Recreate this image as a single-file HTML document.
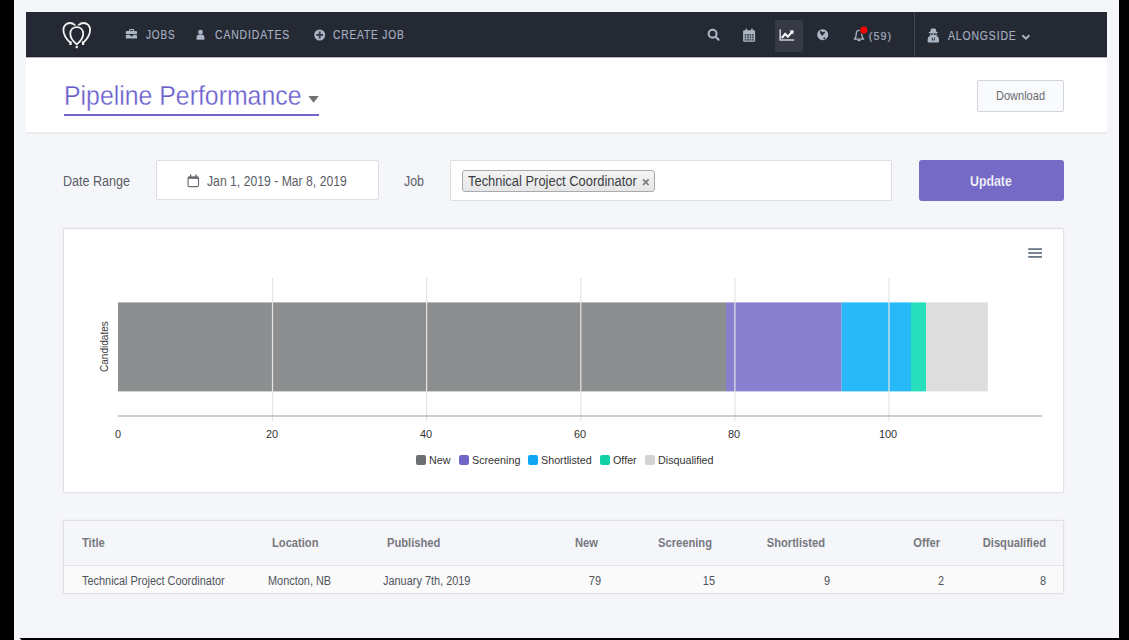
<!DOCTYPE html>
<html><head><meta charset="utf-8">
<style>
html,body{margin:0;padding:0;}
body{width:1129px;height:640px;position:relative;overflow:hidden;background:#000;font-family:"Liberation Sans",sans-serif;}
.a{position:absolute;}
.t{position:absolute;white-space:nowrap;line-height:1;transform-origin:0 0;}
.r{transform-origin:100% 0;text-align:right;}
.c{transform-origin:50% 0;text-align:center;}
#page{left:14px;top:0;width:1105px;height:640px;background:#f5f6fa;}
#nav{left:26px;top:12px;width:1081px;height:45px;background:#252934;}
.nt{color:#a3adbf;font-size:12.3px;letter-spacing:1px;transform:scaleX(0.85);-webkit-text-stroke:0.2px #a3adbf;}
#hdr{left:26px;top:57px;width:1081px;height:75px;background:#fff;border-bottom:2px solid #ececef;}
.box{position:absolute;box-sizing:border-box;background:#fff;border:1px solid #dddee2;border-radius:2px;}
.ft{font-size:14px;color:#5a5e67;}
.th{font-size:12px;font-weight:bold;color:#77797f;transform:scaleX(0.93);}
.td{font-size:12px;color:#50545c;transform:scaleX(0.91);}
.ax{font-size:11.5px;color:#333;width:40px;text-align:center;transform:scaleX(0.95);}
.lg{font-size:11.2px;color:#333;transform:scaleX(0.96);}
.sw{position:absolute;width:10px;height:10px;border-radius:2px;top:455px;}
</style></head>
<body>
<div id="page" class="a"></div>
<svg class="a" style="left:0;top:636px" width="1129" height="4" viewBox="0 636 1129 4"><path d="M19.5 638 H1129 V640 H21.5Z" fill="#000"/></svg>

<!-- ============ NAVBAR ============ -->
<div id="nav" class="a"></div>
<div class="a" style="left:26px;top:56px;width:1081px;height:1px;background:#1d2029"></div>

<!-- logo -->
<svg class="a" style="left:58px;top:18px" width="40" height="34" viewBox="58 18 40 34">
  <g fill="none" stroke="#f2f2f2" stroke-width="1.8" stroke-linejoin="round">
    <path d="M70.4 42.8 C66.6 39.2 63.4 35 63.4 29.9 C63.4 25.9 66.3 23 69.9 23 C73.6 23 76.6 25.9 76.6 29.9 C76.6 35 74.1 39.2 70.4 42.8Z"/>
    <path d="M83.1 42.8 C86.9 39.2 90.1 35 90.1 29.9 C90.1 25.9 87.2 23 83.6 23 C79.9 23 76.9 25.9 76.9 29.9 C76.9 35 79.4 39.2 83.1 42.8Z"/>
    <path d="M76.75 44.4 C73 41.2 70.3 37.8 70.3 33.7 C70.3 29.7 73.1 27.1 76.75 27.1 C80.4 27.1 83.2 29.7 83.2 33.7 C83.2 37.8 80.5 41.2 76.75 44.4Z" fill="#252934" stroke="#252934" stroke-width="3.8"/>
    <path d="M76.75 44.4 C73 41.2 70.3 37.8 70.3 33.7 C70.3 29.7 73.1 27.1 76.75 27.1 C80.4 27.1 83.2 29.7 83.2 33.7 C83.2 37.8 80.5 41.2 76.75 44.4Z"/>
  </g>
  <g fill="#f2f2f2">
    <rect x="69.4" y="42.6" width="2.2" height="2.4"/>
    <rect x="82" y="42.6" width="2.2" height="2.4"/>
    <rect x="75.65" y="45.8" width="2.2" height="2.4"/>
  </g>
</svg>
<!-- briefcase -->
<svg class="a" style="left:124px;top:27px" width="15" height="13" viewBox="124 27 15 13">
  <path d="M129.2 31.2 V29.6 C129.2 29.2 129.5 28.9 129.9 28.9 H133.3 C133.7 28.9 134 29.2 134 29.6 V31.2 H132.9 V30 H130.3 V31.2Z" fill="#acb5c4"/>
  <rect x="125.8" y="31" width="11.2" height="3.3" rx="0.7" fill="#acb5c4"/>
  <rect x="125.8" y="35.1" width="11.2" height="3.5" rx="0.7" fill="#acb5c4"/>
  <rect x="130.3" y="34" width="2.6" height="2.2" rx="0.4" fill="#252934"/>
</svg>
<div class="t nt" style="left:145.8px;top:29px;transform:scaleX(0.815)">JOBS</div>
<!-- user -->
<svg class="a" style="left:194px;top:28px" width="13" height="14" viewBox="194 28 13 14">
  <circle cx="200.5" cy="32.1" r="2.4" fill="#acb5c4"/>
  <path d="M196.6 39.8 V37.4 C196.6 35.6 197.8 34.6 199.6 34.6 H201.4 C203.2 34.6 204.4 35.6 204.4 37.4 V39.8Z" fill="#acb5c4"/>
</svg>
<div class="t nt" style="left:215px;top:29px">CANDIDATES</div>
<!-- plus circle -->
<svg class="a" style="left:312px;top:28px" width="15" height="15" viewBox="312 28 15 15">
  <circle cx="319.7" cy="35" r="5.5" fill="#acb5c4"/>
  <path d="M319.7 31.6v6.8M316.3 35h6.8" stroke="#3c4150" stroke-width="1.9"/>
</svg>
<div class="t nt" style="left:333.3px;top:29px;transform:scaleX(0.83)">CREATE JOB</div>

<!-- search -->
<svg class="a" style="left:705px;top:27px" width="16" height="16" viewBox="705 27 16 16">
  <circle cx="712.6" cy="33.7" r="3.95" fill="none" stroke="#acb5c4" stroke-width="2.1"/>
  <path d="M715.6 36.7 L718.6 39.7" stroke="#acb5c4" stroke-width="2.1" stroke-linecap="round"/>
</svg>
<!-- calendar -->
<svg class="a" style="left:742px;top:27px" width="15" height="16" viewBox="742 27 15 16">
  <rect x="743.1" y="30.2" width="12" height="11.6" rx="1.2" fill="#acb5c4"/>
  <rect x="745.5" y="28.6" width="1.7" height="3" rx="0.8" fill="#acb5c4"/>
  <rect x="751.1" y="28.6" width="1.7" height="3" rx="0.8" fill="#acb5c4"/>
  <g fill="#252934" opacity="0.75"><rect x="744.60" y="34.00" width="1.75" height="1.75"/><rect x="747.05" y="34.00" width="1.75" height="1.75"/><rect x="749.50" y="34.00" width="1.75" height="1.75"/><rect x="751.95" y="34.00" width="1.75" height="1.75"/><rect x="744.60" y="36.45" width="1.75" height="1.75"/><rect x="747.05" y="36.45" width="1.75" height="1.75"/><rect x="749.50" y="36.45" width="1.75" height="1.75"/><rect x="751.95" y="36.45" width="1.75" height="1.75"/><rect x="744.60" y="38.90" width="1.75" height="1.75"/><rect x="747.05" y="38.90" width="1.75" height="1.75"/><rect x="749.50" y="38.90" width="1.75" height="1.75"/><rect x="751.95" y="38.90" width="1.75" height="1.75"/></g>
</svg>
<!-- active chart -->
<div class="a" style="left:775px;top:20px;width:28px;height:32px;background:#363a47;border-radius:2px"></div>
<svg class="a" style="left:775px;top:20px" width="28" height="32" viewBox="775 20 28 32">
  <path d="M780.2 29.4 V40 H794.2" fill="none" stroke="#cdd0d8" stroke-width="1.6"/>
  <path d="M781.8 38 L785.2 33.8 L787.8 36.6 L792 32" fill="none" stroke="#f8f8fa" stroke-width="2.1"/>
  <path d="M789.4 30.6 L793.6 30.2 L793.3 34.4Z" fill="#f8f8fa"/>
</svg>
<!-- globe -->
<svg class="a" style="left:815px;top:27px" width="16" height="16" viewBox="815 27 16 16">
  <circle cx="822.7" cy="34.7" r="5.5" fill="#acb5c4"/>
  <path d="M819.8 31.4 C820.6 30.6 821.8 31 822.3 32.2 C823.1 31.6 824.5 31.5 825.3 32.1 C824.7 33.5 823.5 34.4 822.3 35.9 C821.1 34.6 820 33.3 819.8 31.4Z" fill="#252934"/>
  <circle cx="824.3" cy="38.3" r="0.95" fill="#252934"/>
</svg>
<!-- bell -->
<svg class="a" style="left:851px;top:24px" width="18" height="19" viewBox="851 24 18 19">
  <path d="M854.3 39.2 H863.7 C862.3 38 861.8 36.6 861.8 34.4 C861.8 31.8 860.6 30.4 859 30.4 C857.4 30.4 856.2 31.8 856.2 34.4 C856.2 36.6 855.7 38 854.3 39.2Z" fill="none" stroke="#acb5c4" stroke-width="1.3" stroke-linejoin="round"/>
  <path d="M857.8 40 C858 40.8 860 40.8 860.2 40" stroke="#acb5c4" stroke-width="1.2" fill="none"/>
  <circle cx="863.8" cy="30" r="4.3" fill="#1f3338"/>
  <circle cx="863.8" cy="30" r="3.6" fill="#ff0000"/>
</svg>
<div class="t nt" style="left:868.8px;top:30.9px;font-size:10.8px;letter-spacing:1px;transform:none">(59)</div>
<!-- divider -->
<div class="a" style="left:913.5px;top:12px;width:1px;height:45px;background:#3d4453"></div>
<!-- spy -->
<svg class="a" style="left:926px;top:27px" width="14" height="17" viewBox="926 27 14 17">
  <path d="M931 28.8 C932 28.4 934.6 28.4 935.6 28.8 L936.4 31.8 L937.8 32.2 L937.8 33 L928.8 33 L928.8 32.2 L930.2 31.8 Z" fill="#acb5c4"/>
  <path d="M929.8 33.6 H936.8 L936.6 36 L938 36.8 C938.8 37.6 939 39.6 939 41 C939 42 938.4 42.5 937.4 42.5 H929.2 C928.2 42.5 927.6 42 927.6 41 C927.6 39.6 927.8 37.6 928.6 36.8 L930 36 Z" fill="#acb5c4"/>
  <rect x="930.8" y="34" width="1.9" height="0.9" fill="#252934"/><rect x="933.9" y="34" width="1.9" height="0.9" fill="#252934"/>
  <path d="M931.6 37.4 L932.4 37.4 L932.9 39.4 L932.9 40.4 L932.1 40.4Z M935 37.4 L934.2 37.4 L933.7 39.4 L933.7 40.4 L934.5 40.4Z" fill="#252934"/>
</svg>
<div class="t nt" style="left:947.7px;top:30.4px">ALONGSIDE</div>
<svg class="a" style="left:1020px;top:33px" width="12" height="8" viewBox="1020 33 12 8">
  <path d="M1022.4 35.2 L1025.9 38.6 L1029.4 35.2" fill="none" stroke="#acb5c4" stroke-width="1.9"/>
</svg>

<!-- ============ HEADER ============ -->
<div id="hdr" class="a"></div>
<div class="a" style="left:26px;top:57px;width:1081px;height:1px;background:#b8bac0"></div>
<div class="t" style="left:64px;top:81.6px;font-size:28px;color:#6a5ecd;transform:scaleX(0.887);-webkit-text-stroke:0.3px #fff">Pipeline Performance</div>
<svg class="a" style="left:307px;top:94px" width="14" height="10" viewBox="307 94 14 10">
  <path d="M308.4 95.9 H318.8 L313.6 102.7Z" fill="#707174"/>
</svg>
<div class="a" style="left:64px;top:113.5px;width:255px;height:2px;background:#7065cd"></div>
<div class="box" style="left:977px;top:80px;width:87px;height:32px;background:#f9fafb;border-color:#d3d4d7"></div>
<div class="t" style="left:995.8px;top:90px;font-size:12.6px;color:#686b72;transform:scaleX(0.875)">Download</div>

<!-- ============ FILTERS ============ -->
<div class="t ft" style="left:63px;top:174.1px;transform:scaleX(0.897)">Date Range</div>
<div class="box" style="left:156px;top:160px;width:223px;height:40px"></div>
<svg class="a" style="left:186px;top:173px" width="14" height="15" viewBox="186 173 14 15">
  <rect x="188.1" y="177" width="10.4" height="9.6" rx="1.2" fill="none" stroke="#6a6b70" stroke-width="1.15"/>
  <rect x="188" y="176.6" width="10.6" height="2.3" fill="#6a6b70"/>
  <rect x="189.95" y="174.3" width="1.35" height="3.2" rx="0.6" fill="#6a6b70"/>
  <rect x="195.35" y="174.3" width="1.35" height="3.2" rx="0.6" fill="#6a6b70"/>
</svg>
<div class="t ft" style="left:206.5px;top:174.3px;transform:scaleX(0.872)">Jan 1, 2019 - Mar 8, 2019</div>
<div class="t ft" style="left:403.5px;top:174.1px;transform:scaleX(0.886)">Job</div>
<div class="box" style="left:450px;top:160px;width:442px;height:41px"></div>
<div class="a" style="left:462px;top:169.5px;width:193px;height:22px;box-sizing:border-box;border:1px solid #a9aaad;border-radius:3px;background:linear-gradient(#f4f4f4,#e6e6e6);"></div>
<div class="t" style="left:467.6px;top:173.8px;font-size:14px;color:#3a3d44;transform:scaleX(0.923)">Technical Project Coordinator</div>
<svg class="a" style="left:640px;top:175px" width="12" height="12" viewBox="640 175 12 12">
  <path d="M643 179.4 L648.6 185 M648.6 179.4 L643 185" stroke="#77787c" stroke-width="1.7"/>
</svg>
<div class="a" style="left:919px;top:160px;width:145px;height:41px;background:#766ac7;border-radius:3px"></div>
<div class="t" style="left:970.3px;top:174px;font-size:14px;font-weight:bold;color:#fff;transform:scaleX(0.88);-webkit-text-stroke:0.25px #766ac7">Update</div>

<!-- ============ CHART ============ -->
<div class="box" style="left:63px;top:228px;width:1001px;height:265px;border-color:#e1e1e5;box-shadow:0 0 0 0.6px #ececef"></div>
<svg class="a" style="left:0;top:0" width="1129" height="640" viewBox="0 0 1129 640">
  <rect x="118" y="302.4" width="608" height="89" fill="#8d8e8f"/>
  <rect x="726" y="302.4" width="115.6" height="89" fill="#8880cf"/>
  <rect x="841.6" y="302.4" width="69.4" height="89" fill="#27b9f7"/>
  <rect x="911" y="302.4" width="15.2" height="89" fill="#27dfba"/>
  <rect x="926.2" y="302.4" width="61.6" height="89" fill="#dddddd"/>
  <g fill="#e4e4e4">
    <rect x="271.9" y="278" width="1.2" height="143"/>
    <rect x="426.0" y="278" width="1.2" height="143"/>
    <rect x="580.2" y="278" width="1.2" height="143"/>
    <rect x="734.3" y="278" width="1.2" height="143"/>
    <rect x="888.4" y="278" width="1.2" height="143"/>
  </g>
  <rect x="118" y="415.5" width="924" height="1" fill="#8fa2ae"/>
  <g fill="#6b7888">
    <rect x="1028.2" y="248.2" width="13.8" height="1.8"/>
    <rect x="1028.2" y="252.1" width="13.8" height="1.8"/>
    <rect x="1028.2" y="256" width="13.8" height="1.8"/>
  </g>
</svg>
<div class="t c ax" style="left:98px;top:429.1px">0</div>
<div class="t c ax" style="left:252px;top:429.1px">20</div>
<div class="t c ax" style="left:406px;top:429.1px">40</div>
<div class="t c ax" style="left:560px;top:429.1px">60</div>
<div class="t c ax" style="left:714px;top:429.1px">80</div>
<div class="t c ax" style="left:868px;top:429.1px">100</div>
<div class="t" style="left:55.3px;top:341px;width:100px;text-align:center;font-size:11.2px;color:#3a3a3a;transform-origin:50% 50%;transform:rotate(-90deg) scaleX(0.9)">Candidates</div>

<div class="sw" style="left:415.8px;background:#6d6e70"></div>
<div class="t lg" style="left:429px;top:454.6px">New</div>
<div class="sw" style="left:458.8px;background:#7166c7"></div>
<div class="t lg" style="left:472px;top:454.6px">Screening</div>
<div class="sw" style="left:528.3px;background:#0fa6f5"></div>
<div class="t lg" style="left:541px;top:454.6px">Shortlisted</div>
<div class="sw" style="left:600px;background:#13d1a6"></div>
<div class="t lg" style="left:612.5px;top:454.6px">Offer</div>
<div class="sw" style="left:645.4px;background:#d3d3d3"></div>
<div class="t lg" style="left:658px;top:454.6px">Disqualified</div>

<!-- ============ TABLE ============ -->
<div class="box" style="left:63px;top:520px;width:1001px;height:74px;background:#f5f6fa;border-color:#e1e1e5;border-radius:1px;box-shadow:0 0 0 0.6px #ececef"></div>
<div class="a" style="left:64px;top:565px;width:999px;height:27px;background:#fafafa;border-top:1px solid #e3e4e7"></div>
<div class="t th" style="left:81.6px;top:536.6px">Title</div>
<div class="t th" style="left:271.6px;top:536.6px">Location</div>
<div class="t th" style="left:386.6px;top:536.6px">Published</div>
<div class="t th r" style="left:497.6px;width:100px;top:536.6px">New</div>
<div class="t th r" style="left:611.8px;width:100px;top:536.6px">Screening</div>
<div class="t th r" style="left:725.4px;width:100px;top:536.6px">Shortlisted</div>
<div class="t th r" style="left:840px;width:100px;top:536.6px">Offer</div>
<div class="t th r" style="left:945.6px;width:100px;top:536.6px">Disqualified</div>

<div class="t td" style="left:81.6px;top:575.1px">Technical Project Coordinator</div>
<div class="t td" style="left:268.4px;top:575.1px">Moncton, NB</div>
<div class="t td" style="left:382.8px;top:575.1px">January 7th, 2019</div>
<div class="t td r" style="left:501px;width:100px;top:575.1px">79</div>
<div class="t td r" style="left:615px;width:100px;top:575.1px">15</div>
<div class="t td r" style="left:729.7px;width:100px;top:575.1px">9</div>
<div class="t td r" style="left:844px;width:100px;top:575.1px">2</div>
<div class="t td r" style="left:946px;width:100px;top:575.1px">8</div>
</body></html>
